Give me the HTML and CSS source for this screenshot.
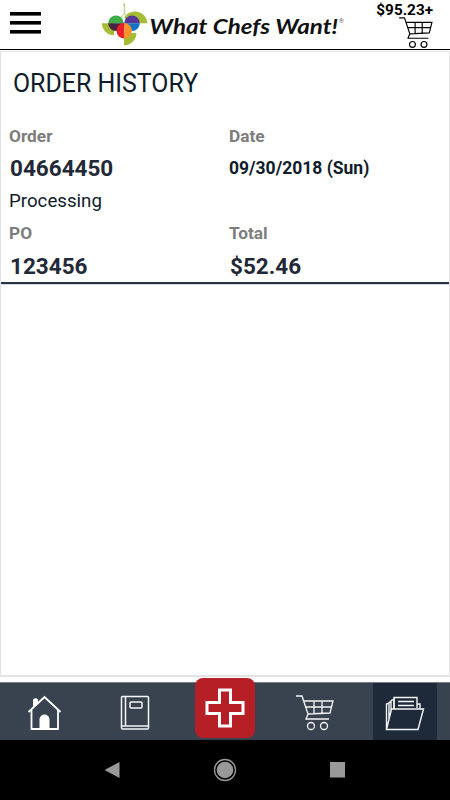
FILE: index.html
```html
<!DOCTYPE html>
<html lang="en">

<head>
    <meta charset="UTF-8">
    <meta name="viewport" content="width=device-width, initial-scale=1.0">
    <title>Order History</title>
    <link rel="stylesheet" href="styles.css">
</head>

<body>

    <header class="header">
        <button class="menu" aria-label="Menu">
            <span></span>
            <span></span>
            <span></span>
        </button>

        <svg class="logo" width="248" height="46" viewBox="0 0 248 46">
            <!-- leaves -->
            <path d="M0 23.300H12V35.300A12 12 0 0 1 0 23.300Z" fill="#a4bd35" />
            <path d="M22 18A12.500 12.500 0 0 1 45.500 23.300H30Z" fill="#a4bd35" />
            <path d="M22 33H34.500A12.500 12.500 0 0 1 22 45.300Z" fill="#a4bd35" />
            <path d="M22.300 4V14L19 17M22.300 14L26 17" fill="none" stroke="#b5c96b" stroke-width="1" />
            <circle cx="22.300" cy="4.500" r=".9" fill="#a4bd35" />
            <!-- fruit -->
            <path d="M6.200 23.300A7.800 7.800 0 0 1 21.800 23.300Z" fill="#3fae49" />
            <path d="M6.200 23.300A7.800 7.800 0 0 0 21.800 23.300Z" fill="#4a2340" />
            <path d="M22.200 23.300A7.800 7.800 0 0 1 37.800 23.300Z" fill="#57359b" />
            <path d="M22.200 23.300A7.800 7.800 0 0 0 37.800 23.300Z" fill="#1474c4" />
            <path d="M22.200 23A7.700 7.700 0 0 0 22.200 38.400Z" fill="#e8202a" />
            <path d="M22.200 23A7.700 7.700 0 0 1 22.200 38.400Z" fill="#f7922d" />
            <text class="logo-name" x="47.500" y="33.500" textLength="188.500" lengthAdjust="spacingAndGlyphs">What Chefs Want!</text>
            <text class="logo-mark" x="237" y="23">®</text>
        </svg>

        <div class="cart">
            <span class="cart-total">$95.23+</span>
            <svg width="34" height="31" viewBox="0 0 38 35" fill="none" stroke="#000" stroke-width="1.300">
                <path d="M0 1H6L12 19L10 24H33M8 6H37L34 18L12 19M9 12H36M18 6V19M26 6V18" />
                <circle cx="15" cy="31" r="3.300" />
                <circle cx="28" cy="31" r="3.300" />
            </svg>
        </div>
    </header>

    <main class="content">
        <h1>ORDER HISTORY</h1>
        <div class="order">
            <div class="label">Order</div>
            <div class="label">Date</div>
            <div class="value">04664450</div>
            <div class="date">09/30/2018 (Sun)</div>
            <div class="status">Processing</div>
            <div class="label">PO</div>
            <div class="label">Total</div>
            <div class="value">123456</div>
            <div class="value">$52.46</div>
        </div>
    </main>

    <nav class="tabs">
        <a class="tab">
            <svg width="36" height="38" viewBox="0 0 36 38" fill="none" stroke="#fff" stroke-width="1.800">
                <path d="M1.500 18L17.500 3L33.500 18M4.500 16V35H31V16" />
                <path d="M6 5.500Q8.500 3 11 5.500V9L6 13Z" fill="#fff" stroke="none" />
                <path d="M12.500 35V25.500A5 5 0 0 1 22.500 25.500V35Z" fill="#fff" stroke="none" />
            </svg>
        </a>
        <a class="tab">
            <svg width="36" height="38" viewBox="0 0 36 38" fill="none" stroke="#f4f5f6" stroke-width="1.500">
                <rect x="4.500" y="2.500" width="27" height="32.500" rx="1" />
                <path d="M8.500 3V32M5 32H31" />
                <rect x="13" y="8" width="12" height="6" rx="1" />
            </svg>
        </a>
        <a class="tab">
            <span class="add">
                <svg width="40" height="40" viewBox="0 0 40 40" fill="none" stroke="#fff" stroke-width="3">
                    <path d="M14.500 2H25.500V14.500H38V25.500H25.500V38H14.500V25.500H2V14.500H14.500Z" />
                </svg>
            </span>
        </a>
        <a class="tab">
            <svg width="38" height="36" viewBox="0 0 38 36" fill="none" stroke="#f4f5f6" stroke-width="1.300">
                <path d="M0 1H6L12 19L10 24H33M8 6H37L34 18L12 19M9 12H36M18 6V19M26 6V18" />
                <circle cx="15" cy="31" r="3.500" />
                <circle cx="28" cy="31" r="3.500" />
            </svg>
        </a>
        <a class="tab active">
            <svg width="40" height="36" viewBox="0 0 40 36" fill="none" stroke="#f4f5f6" stroke-width="1.400">
                <path d="M1.500 34.500L6.500 14H38.500L33 34.500ZM1.500 34.500V9L4 8V24M4 8L6 6V17M6 6L9 4V14" />
                <path d="M9 14V2.500H32V13M13 6.500H29M13 10.500H29M32 9H35V14" />
            </svg>
        </a>
    </nav>

    <footer class="system-bar">
        <svg width="16" height="18" viewBox="0 0 16 18"><path d="M.5 9L15.500 1V17Z" fill="#999" /></svg>
        <svg width="24" height="24" viewBox="0 0 24 24">
            <circle cx="12" cy="12" r="10.500" fill="none" stroke="#999" stroke-width="1.300" />
            <circle cx="12" cy="12" r="8.300" fill="#999" />
        </svg>
        <svg width="16" height="16" viewBox="0 0 16 16"><rect width="15" height="15.500" fill="#999" /></svg>
    </footer>

</body>

</html>
```
FILE: styles.css
```css
* {
    box-sizing: border-box;
}

body {
    margin: 0;
    height: 100vh;
    display: flex;
    flex-direction: column;
    font-family: Roboto, sans-serif;
    background-color: #fff;
    color: #101c2b;
}

.header {
    height: 50px;
    padding-left: 10px;
    padding-right: 17px;
    display: flex;
    align-items: flex-start;
    border-bottom: 1px solid #000;
}

.menu {
    width: 31px;
    margin-top: 12px;
    padding: 0;
    display: flex;
    flex-direction: column;
    gap: 5px;
    border: none;
    background: none;
}

.menu span {
    height: 4px;
    background-color: #000;
    border-bottom: 1px solid #666;
}

.logo {
    margin-left: 61px;
}

.logo-name {
    font: italic 700 20px Lato, sans-serif;
    fill: #111;
}

.logo-mark {
    font-size: 6px;
    fill: #555;
}

.cart {
    margin-left: auto;
    display: flex;
    flex-direction: column;
    align-items: flex-end;
    color: #000;
}

.cart-total {
    font-size: 15.300px;
    font-weight: 700;
    line-height: 20px;
}

.cart svg {
    margin-top: -3px;
}

.content {
    height: 626px;
    margin-top: 1px;
    border: 1px solid #e3e3e3;
    border-bottom-width: 2px;
}

h1 {
    margin: 0;
    padding: 16px 12px 0;
    font-size: 24.900px;
    font-weight: 400;
    line-height: 32px;
}

.order {
    height: 184px;
    padding: 20px 8px 0;
    display: grid;
    grid-template-columns: 220px 1fr;
    grid-template-rows: 31px 33px 33px 32px 33px;
    align-items: center;
    border-bottom: 2px solid #273345;
    box-shadow: 0 1px 0 #d5d8dc;
}

.label {
    font-size: 17.300px;
    font-weight: 700;
    color: #7d7d7d;
}

.value {
    padding-left: 1px;
    font-size: 22.500px;
    font-weight: 700;
    color: #1f2937;
}

.date {
    font-size: 17.500px;
    font-weight: 700;
}

.status {
    grid-column: 1 / 3;
    font-size: 18.700px;
}

.tabs {
    height: 58px;
    margin-top: auto;
    display: grid;
    grid-template-columns: repeat(5, 1fr);
    background-color: #394350;
    border-top: 1px solid #777d85;
}

.tab {
    display: flex;
    align-items: center;
    justify-content: center;
    padding-top: 3px;
}

.active {
    margin: 0 13px;
    background-color: #1e2a3a;
}

.add {
    flex: none;
    width: 60px;
    height: 60px;
    margin-top: -11px;
    display: flex;
    align-items: center;
    justify-content: center;
    border-radius: 8px;
    background-color: #b71f27;
}

.system-bar {
    height: 60px;
    padding: 0 104px;
    display: flex;
    align-items: center;
    justify-content: space-between;
    background-color: #000;
}
```
